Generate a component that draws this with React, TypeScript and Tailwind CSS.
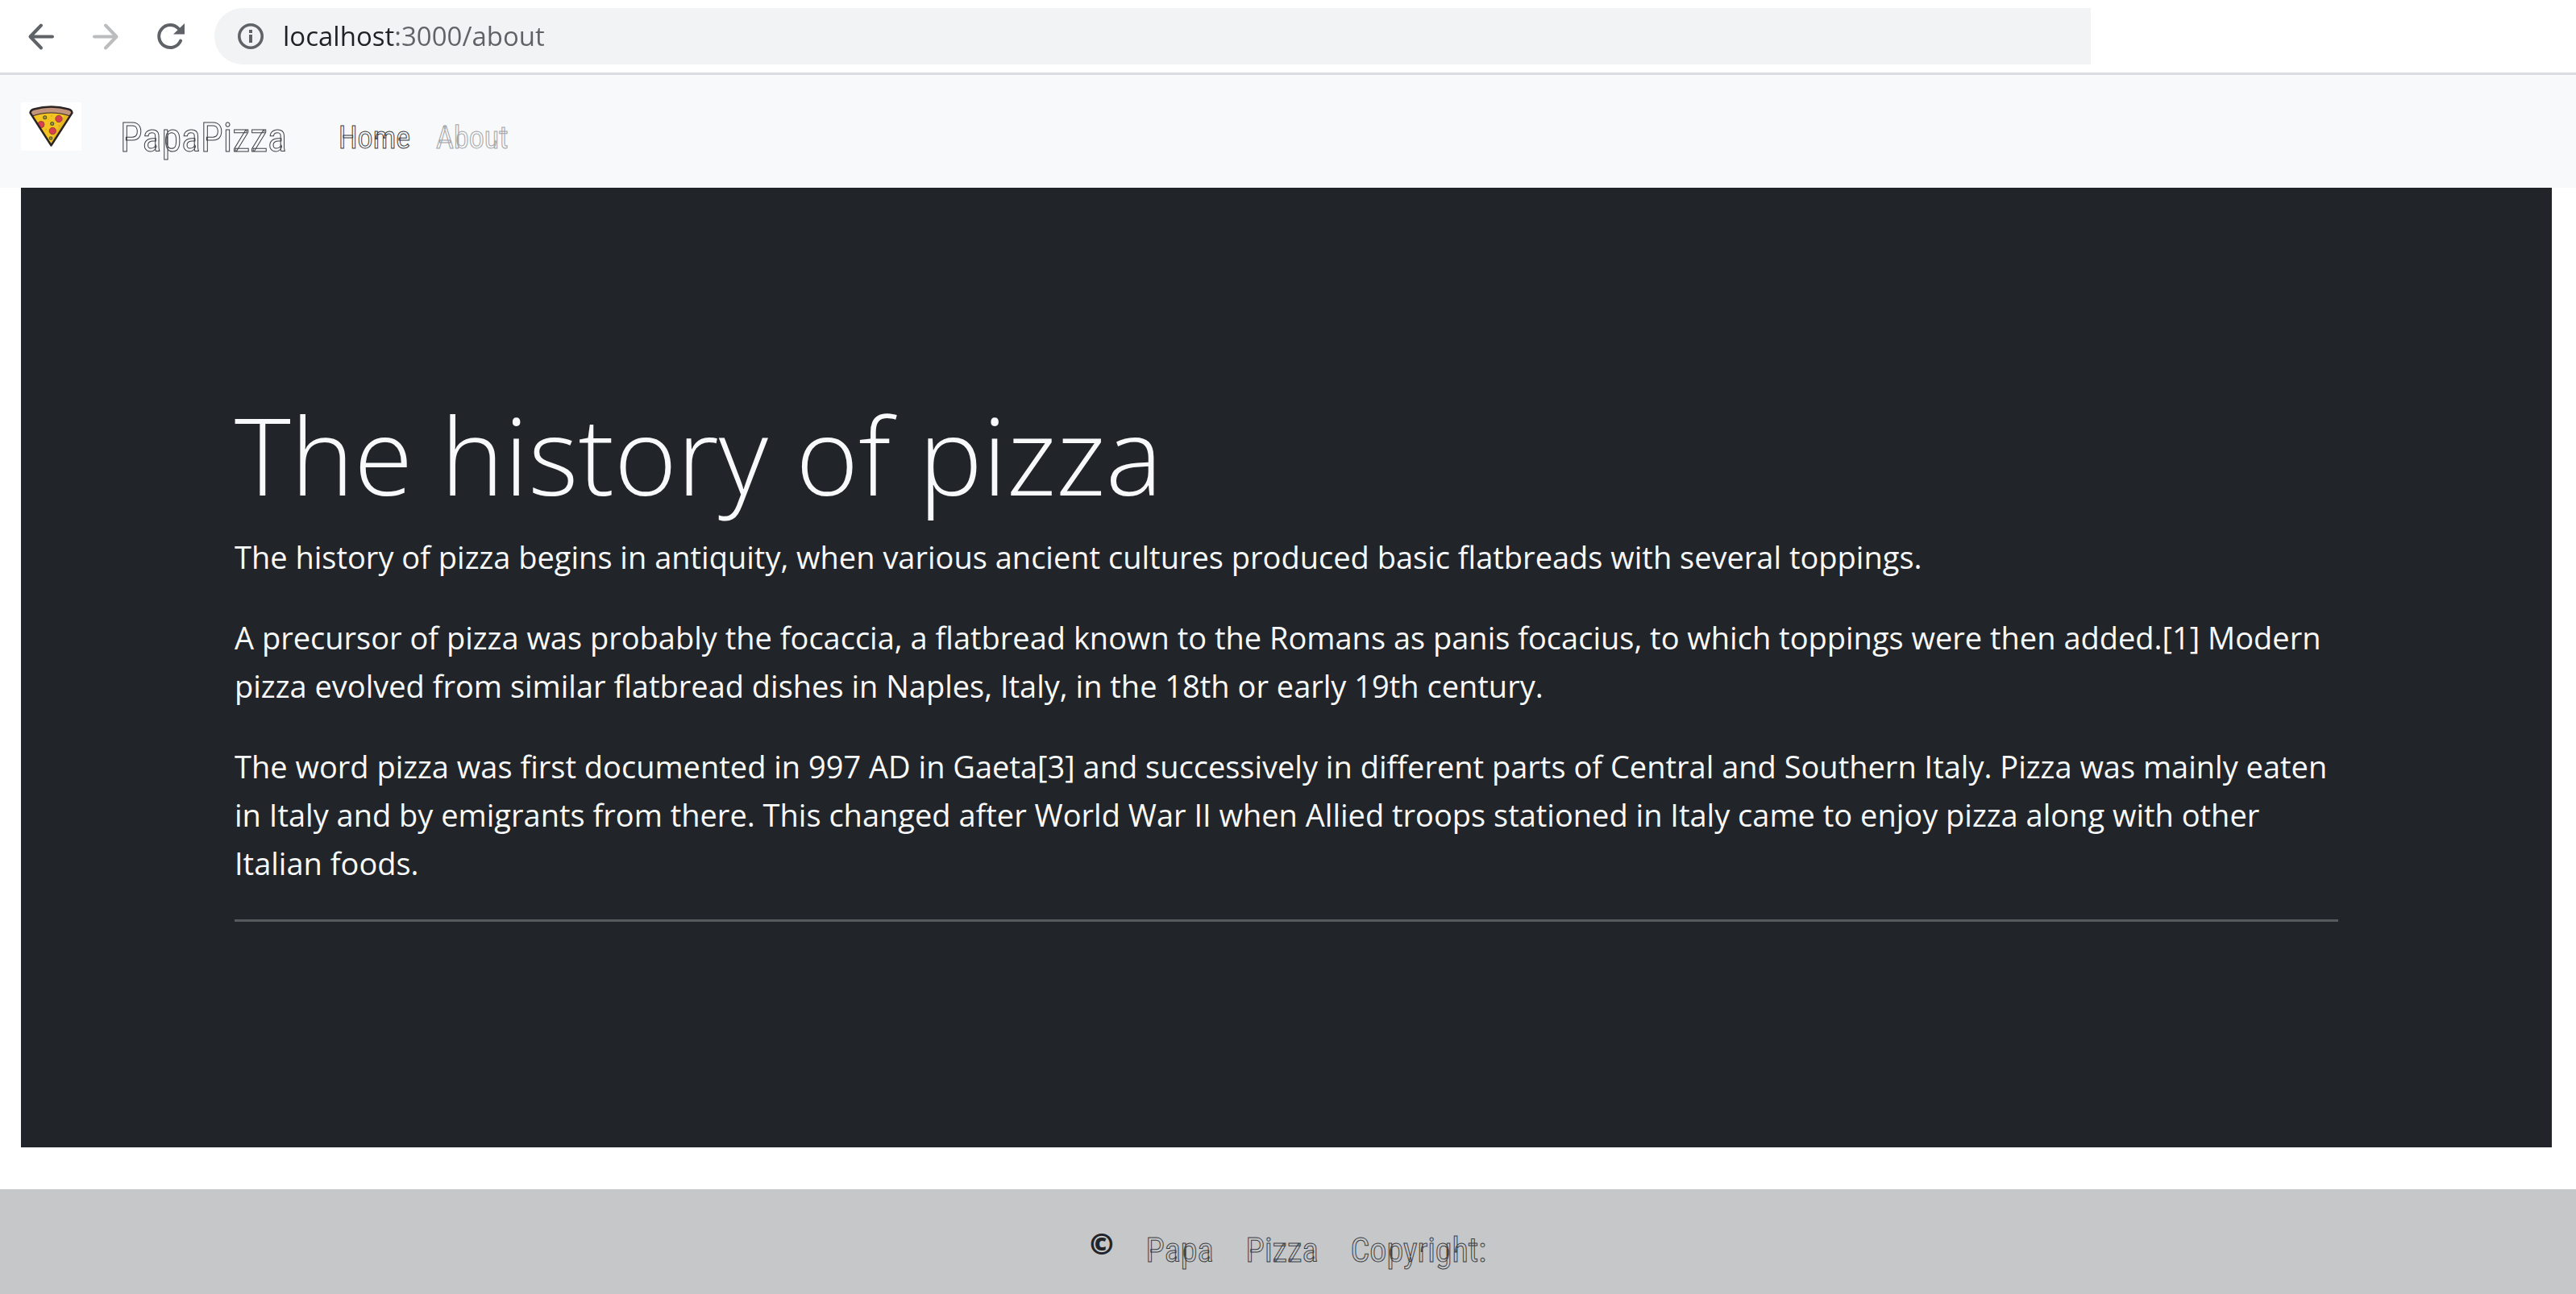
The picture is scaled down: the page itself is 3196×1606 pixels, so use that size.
const outlined = "text-transparent [-webkit-text-stroke:1px_#3d4146]";
const outlinedMuted = "text-transparent [-webkit-text-stroke:1px_#a3a5a8]";

function BackIcon() {
  return (
    <svg viewBox="0 0 48 48" className="size-12" fill="none" stroke="currentColor" strokeWidth="4" strokeLinecap="round" strokeLinejoin="round" aria-hidden="true">
      <path d="M38 24.5H11M24 10.5L10.5 24.5L24 38.5" />
    </svg>
  );
}

function ForwardIcon() {
  return (
    <svg viewBox="0 0 48 48" className="size-12" fill="none" stroke="currentColor" strokeWidth="4" strokeLinecap="round" strokeLinejoin="round" aria-hidden="true">
      <path d="M10 24.5H37M24 10.5L37.5 24.5L24 38.5" />
    </svg>
  );
}

function ReloadIcon() {
  return (
    <svg viewBox="0 0 48 48" className="size-12" aria-hidden="true">
      <path d="M37.1 29.5A14 14 0 1 1 34.5 14.5" fill="none" stroke="currentColor" strokeWidth="4" strokeLinecap="round" />
      <path d="M42 8V21.5H28Z" fill="currentColor" />
    </svg>
  );
}

function InfoIcon() {
  return (
    <svg viewBox="0 0 32 32" className="size-8 shrink-0" aria-hidden="true">
      <circle cx="16" cy="16" r="14.2" fill="none" stroke="currentColor" strokeWidth="3.6" />
      <path d="M14 8h4v4h-4zM14 14h4v10h-4z" fill="currentColor" />
    </svg>
  );
}

function PizzaLogo() {
  return (
    <svg viewBox="0 0 75 60" className="h-[60px] w-[75px] bg-white" role="img" aria-label="Pizza slice">
      <path d="M14 16Q37.5 7 61 16L37.5 53Z" fill="#f3c322" />
      <path d="M46 13L61 16L37.5 53L36 50Q46 34 54 16Z" fill="#e0ad24" opacity=".6" />
      <path d="M11.5 13Q12 9.5 16 8.5Q37.5 2.5 59 8.5Q63 9.5 63.5 13L61 17Q37.5 9 14 17Z" fill="#c3947c" />
      <path d="M14 17Q37.5 9 61 17" fill="none" stroke="#3a2c26" strokeWidth="1.2" />
      <g fill="#d8404f" stroke="#8a3a2c" strokeWidth=".8">
        <circle cx="47" cy="20.5" r="4.2" />
        <circle cx="25" cy="27.5" r="4" />
        <circle cx="39.3" cy="35.5" r="4.2" />
      </g>
      <g fill="#a9a545" stroke="#55562a" strokeWidth="1.2">
        <circle cx="29.7" cy="18.8" r="1.9" />
        <circle cx="38.7" cy="26.5" r="1.9" />
        <circle cx="37" cy="44.5" r="1.7" />
      </g>
      <g fill="#c9a31f">
        <circle cx="38" cy="17" r=".8" />
        <circle cx="47" cy="29" r=".8" />
        <circle cx="31" cy="34" r=".8" />
        <circle cx="34" cy="21" r=".6" />
      </g>
      <path d="M11.5 13Q12 9.5 16 8.5Q37.5 2.5 59 8.5Q63 9.5 63.5 13L37.5 53.5Z" fill="none" stroke="#2a2422" strokeWidth="2.4" strokeLinejoin="round" />
    </svg>
  );
}

export default function App() {
  return (
    <div className="bg-white font-['Open_Sans','Noto_Sans',sans-serif] text-[#212529]">
      <header className="flex h-[93px] items-center border-b-[3px] border-[#dadcdf] pr-[602px] pl-[27px] text-[#5f6368]">
        <div className="flex gap-8">
          <button type="button" aria-label="Back"><BackIcon /></button>
          <button type="button" aria-label="Forward" className="text-[#babcbe]"><ForwardIcon /></button>
          <button type="button" aria-label="Reload"><ReloadIcon /></button>
        </div>
        <label className="ml-[31px] flex h-[70px] flex-1 items-center gap-6 rounded-l-full bg-[#f1f3f4] pl-[29px]">
          <InfoIcon />
          <input
            type="text"
            aria-label="Address"
            defaultValue="localhost:3000/about"
            className="min-w-0 flex-1 bg-[linear-gradient(90deg,#202124_138px,#5f6368_138px)] bg-clip-text text-[33px] leading-[48px] text-transparent outline-none"
          />
        </label>
      </header>

      <nav className="flex items-start bg-[#f8f9fb] px-[26px] pt-[34px] pb-8 font-['Roboto_Condensed','Open_Sans',sans-serif]">
        <a href="#home" className="flex items-start gap-12">
          <PizzaLogo />
          <span className={`pt-3.5 text-[50px] leading-[60px] ${outlined}`}>PapaPizza</span>
        </a>
        <ul className="ml-16 flex gap-8 pt-3.5 text-[38px] leading-[60px]">
          <li><a href="#home" className={outlined}>Home</a></li>
          <li><a href="#about" className={outlinedMuted}>About</a></li>
        </ul>
      </nav>

      <main className="mr-[30px] ml-[26px] bg-[#212529] px-[265px] pt-[247px] pb-[280px] text-[#f8f9fa]">
        <h1 className="mb-[13px] text-[133px] leading-[168px] font-light">The history of pizza</h1>
        <div className="flex flex-col gap-10 text-[38px] leading-[60px]">
          <p>The history of pizza begins in antiquity, when various ancient cultures produced basic flatbreads with several toppings.</p>
          <p>A precursor of pizza was probably the focaccia, a flatbread known to the Romans as panis focacius, to which toppings were then added.[1] Modern pizza evolved from similar flatbread dishes in Naples, Italy, in the 18th or early 19th century.</p>
          <p>The word pizza was first documented in 997 AD in Gaeta[3] and successively in different parts of Central and Southern Italy. Pizza was mainly eaten in Italy and by emigrants from there. This changed after World War II when Allied troops stationed in Italy came to enjoy pizza along with other Italian foods.</p>
          <hr className="border-t-[3px] border-[#575a5d]" />
        </div>
      </main>

      <footer className="mt-[52px] flex items-start justify-center gap-10 bg-[#c6c7c9] pt-[46px] pb-6 font-['Roboto_Condensed','Open_Sans',sans-serif] text-[42px] leading-[60px]">
        <span className="font-['Open_Sans',sans-serif] text-[36px] leading-[44px] font-extrabold">©</span>
        <span className={outlined}>Papa</span>
        <span className={outlined}>Pizza</span>
        <span className={outlined}>Copyright:</span>
      </footer>
    </div>
  );
}
